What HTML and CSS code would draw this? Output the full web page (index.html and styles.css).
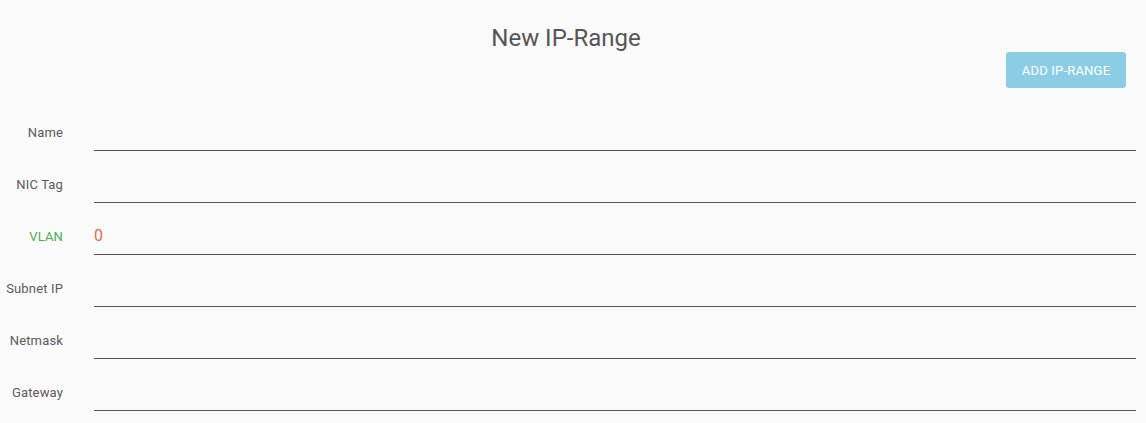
FILE: index.html
```html
<!DOCTYPE html>
<html>
<head>
<meta charset="utf-8">
<link rel="stylesheet" href="styles.css">
</head>
<body>
<div class="page">
  <header class="header">
    <h1 class="title">New IP-Range</h1>
    <div class="actions"><button class="btn">Add IP-Range</button></div>
  </header>
  <form class="form">
    <div class="row"><label class="label">Name</label><div class="field"></div></div>
    <div class="row"><label class="label">NIC Tag</label><div class="field"></div></div>
    <div class="row"><label class="label label-ok">VLAN</label><div class="field"><span class="value-err">0</span></div></div>
    <div class="row"><label class="label">Subnet IP</label><div class="field"></div></div>
    <div class="row"><label class="label">Netmask</label><div class="field"></div></div>
    <div class="row"><label class="label">Gateway</label><div class="field"></div></div>
  </form>
</div>
</body>
</html>
```
FILE: styles.css
```css
html, body {
  margin: 0;
  padding: 0;
  background: #fafafa;
  font-family: Roboto, "Liberation Sans", sans-serif;
  color: #555;
}
.page {
  width: 1146px;
  height: 423px;
  overflow: hidden;
}
.header {
  padding-top: 23px;
}
.title {
  margin: 0;
  height: 29px;
  line-height: 30px;
  font-size: 24px;
  font-weight: 400;
  text-align: center;
  color: #555;
  padding-right: 14px;
}
.actions {
  display: flex;
  justify-content: flex-end;
  padding-right: 20px;
}
.btn {
  width: 120px;
  height: 36px;
  border: none;
  border-radius: 3px;
  background: #8ccde6;
  color: #fff;
  font-family: Roboto, "Liberation Sans", sans-serif;
  font-size: 13px;
  text-transform: uppercase;
  letter-spacing: 0.2px;
  padding: 0;
}
.form {
  margin-top: 26px;
  display: flex;
  flex-direction: column;
  gap: 15px;
  padding-right: 10px;
}
.row {
  display: grid;
  grid-template-columns: 63px 1fr;
  column-gap: 31px;
  align-items: start;
}
.label {
  text-align: right;
  font-size: 13px;
  letter-spacing: 0.15px;
  line-height: 36px;
  padding-top: 1px;
  color: #5a5a5a;
}
.label-ok {
  color: #4caf50;
}
.field {
  height: 36px;
  border-bottom: 1px solid #555;
  font-size: 16px;
  line-height: 36px;
}
.value-err {
  color: #ee6a47;
}
```
